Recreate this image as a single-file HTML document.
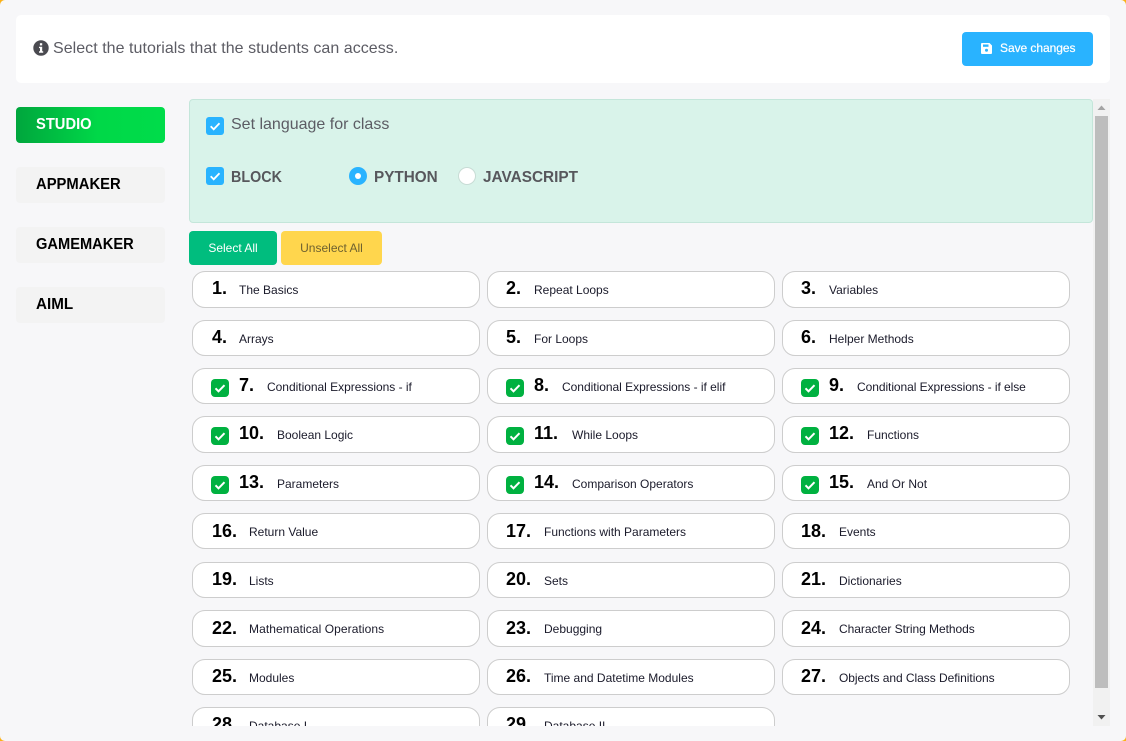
<!DOCTYPE html>
<html><head><meta charset="utf-8"><style>
*{box-sizing:border-box;margin:0;padding:0}
html,body{width:1126px;height:741px;overflow:hidden;background:#fbb117}
body{position:relative;font-family:"Liberation Sans",sans-serif}
#w{position:absolute;left:0;top:0;width:1126px;height:741px;background:#f7f7f9;border-radius:5px;overflow:hidden}
.a{position:absolute;white-space:nowrap}
.sx{display:inline-block;transform-origin:left center}
.tab{position:absolute;left:16px;width:149px;height:36px;background:#f3f3f3;border-radius:4px;font-weight:bold;font-size:16px;line-height:35px;padding-left:20px;color:#000}
#sc{position:absolute;left:189px;top:0;width:906px;height:726px;overflow:hidden}
.c{position:absolute;width:288px;height:36px;background:#fff;border:1px solid #cdcdcd;border-radius:13px}
.t{height:37px}
.n{position:absolute;top:6px;font-size:18px;line-height:21px;font-weight:bold;color:#000;white-space:nowrap}
.d{top:7px}
.l{position:absolute;top:11px;font-size:12px;line-height:15px;color:#1a1a2a;white-space:nowrap}
.k{position:absolute;left:18px;top:10px;width:18px;height:18px;background:#00b140;border-radius:4px}
.k svg,.b svg{position:absolute;left:0;top:0}
.b{position:absolute;width:18px;height:18px;background:#29b3ff;border-radius:3px}
</style></head><body><div id="w">

<div class="a" style="left:16px;top:15px;width:1094px;height:68px;background:#fff;border-radius:5px"></div>
<svg class="a" style="left:33px;top:40px" width="16" height="16" viewBox="0 0 16 16"><circle cx="8" cy="8" r="7.7" fill="#4a4a50"/><rect x="6.9" y="3.2" width="2.3" height="2.2" fill="#fff"/><path d="M6 6.7h3.2v4.6h1v1.4H6v-1.4h1V8.1H6z" fill="#fff"/></svg>
<div class="a" style="left:53px;top:39px;font-size:16px;line-height:19px;color:#5c5c64;letter-spacing:.04px">Select the tutorials that the students can access.</div>

<div class="a" style="left:962px;top:32px;width:131px;height:34px;background:#29b3ff;border-radius:4px"></div>
<svg class="a" style="left:981px;top:43px" width="11" height="11" viewBox="0 0 11 11"><path d="M1 0H8.5L11 2.5V10a1 1 0 0 1-1 1H1a1 1 0 0 1-1-1V1a1 1 0 0 1 1-1z" fill="#fff"/><rect x="2" y="1.5" width="5.5" height="2.3" fill="#29b3ff"/><circle cx="5.5" cy="7.3" r="1.5" fill="#29b3ff"/></svg>
<div class="a" style="left:1000px;top:41px;font-size:12px;line-height:15px;color:#fff;-webkit-text-stroke:.2px #fff;letter-spacing:-.05px">Save changes</div>

<div class="tab" style="top:107px;background:linear-gradient(90deg,#00a63d 0%,#00d848 55%,#00dc4a 100%);color:#fff"><span class="sx" style="transform:scaleX(.92)">STUDIO</span></div>
<div class="tab" style="top:167px"><span class="sx" style="transform:scaleX(.925)">APPMAKER</span></div>
<div class="tab" style="top:227px"><span class="sx" style="transform:scaleX(.916)">GAMEMAKER</span></div>
<div class="tab" style="top:287px"><span class="sx" style="transform:scaleX(.95)">AIML</span></div>

<div class="a" style="left:189px;top:99px;width:904px;height:124px;background:#d9f3ea;border:1px solid #c4e6da;border-radius:4px"></div>
<div class="b" style="left:206px;top:117px"><svg width="18" height="18"><path d="M4.7 9.3l3 3L13.5 6.2" fill="none" stroke="#fff" stroke-width="1.8"/></svg></div>
<div class="a" style="left:231px;top:115px;font-size:16px;line-height:19px;color:#5c5c64">Set language for class</div>
<div class="b" style="left:206px;top:167px"><svg width="18" height="18"><path d="M4.7 9.3l3 3L13.5 6.2" fill="none" stroke="#fff" stroke-width="1.8"/></svg></div>
<div class="a" style="left:231px;top:168px;font-size:16px;line-height:19px;font-weight:bold;color:#57575c"><span class="sx" style="transform:scaleX(.895)">BLOCK</span></div>
<div class="a" style="left:349px;top:167px;width:18px;height:18px;border-radius:50%;background:#29b3ff"></div>
<div class="a" style="left:355px;top:173px;width:6px;height:6px;border-radius:50%;background:#fff"></div>
<div class="a" style="left:374px;top:168px;font-size:16px;line-height:19px;font-weight:bold;color:#57575c"><span class="sx" style="transform:scaleX(.955)">PYTHON</span></div>
<div class="a" style="left:458px;top:167px;width:18px;height:18px;border-radius:50%;background:#fff;border:1px solid #c8dcd5"></div>
<div class="a" style="left:483px;top:168px;font-size:16px;line-height:19px;font-weight:bold;color:#57575c"><span class="sx" style="transform:scaleX(.96)">JAVASCRIPT</span></div>

<div class="a" style="left:189px;top:231px;width:88px;height:34px;background:#00bd7e;border-radius:4px;color:#fff;font-size:12px;line-height:34px;text-align:center">Select All</div>
<div class="a" style="left:281px;top:231px;width:101px;height:34px;background:#ffd64d;border-radius:4px;color:#6e6130;font-size:12px;line-height:34px;text-align:center">Unselect All</div>

<div id="sc">
<div class="c t" style="left:3px;top:271px"><span class="n" style="left:19px">1.</span><span class="l" style="left:46px">The Basics</span></div>
<div class="c t" style="left:298px;top:271px"><span class="n" style="left:18px">2.</span><span class="l" style="left:46px">Repeat Loops</span></div>
<div class="c t" style="left:593px;top:271px"><span class="n" style="left:18px">3.</span><span class="l" style="left:46px">Variables</span></div>

<div class="c" style="left:3px;top:320px"><span class="n" style="left:19px">4.</span><span class="l" style="left:46px">Arrays</span></div>
<div class="c" style="left:298px;top:320px"><span class="n" style="left:18px">5.</span><span class="l" style="left:46px">For Loops</span></div>
<div class="c" style="left:593px;top:320px"><span class="n" style="left:18px">6.</span><span class="l" style="left:46px">Helper Methods</span></div>

<div class="c" style="left:3px;top:368px"><i class="k"><svg width="18" height="18"><path d="M4.5 9.3l3 3L13.5 6.2" fill="none" stroke="#fff" stroke-width="2"/></svg></i><span class="n" style="left:46px">7.</span><span class="l" style="left:74px;letter-spacing:-.02px">Conditional Expressions - if</span></div>
<div class="c" style="left:298px;top:368px"><i class="k"><svg width="18" height="18"><path d="M4.5 9.3l3 3L13.5 6.2" fill="none" stroke="#fff" stroke-width="2"/></svg></i><span class="n" style="left:46px">8.</span><span class="l" style="left:74px;letter-spacing:-.02px">Conditional Expressions - if elif</span></div>
<div class="c" style="left:593px;top:368px"><i class="k"><svg width="18" height="18"><path d="M4.5 9.3l3 3L13.5 6.2" fill="none" stroke="#fff" stroke-width="2"/></svg></i><span class="n" style="left:46px">9.</span><span class="l" style="left:74px;letter-spacing:-.06px">Conditional Expressions - if else</span></div>

<div class="c t" style="left:3px;top:416px"><i class="k"><svg width="18" height="18"><path d="M4.5 9.3l3 3L13.5 6.2" fill="none" stroke="#fff" stroke-width="2"/></svg></i><span class="n" style="left:46px">10.</span><span class="l" style="left:84px">Boolean Logic</span></div>
<div class="c t" style="left:298px;top:416px"><i class="k"><svg width="18" height="18"><path d="M4.5 9.3l3 3L13.5 6.2" fill="none" stroke="#fff" stroke-width="2"/></svg></i><span class="n" style="left:46px">11.</span><span class="l" style="left:84px">While Loops</span></div>
<div class="c t" style="left:593px;top:416px"><i class="k"><svg width="18" height="18"><path d="M4.5 9.3l3 3L13.5 6.2" fill="none" stroke="#fff" stroke-width="2"/></svg></i><span class="n" style="left:46px">12.</span><span class="l" style="left:84px">Functions</span></div>

<div class="c" style="left:3px;top:465px"><i class="k"><svg width="18" height="18"><path d="M4.5 9.3l3 3L13.5 6.2" fill="none" stroke="#fff" stroke-width="2"/></svg></i><span class="n" style="left:46px">13.</span><span class="l" style="left:84px">Parameters</span></div>
<div class="c" style="left:298px;top:465px"><i class="k"><svg width="18" height="18"><path d="M4.5 9.3l3 3L13.5 6.2" fill="none" stroke="#fff" stroke-width="2"/></svg></i><span class="n" style="left:46px">14.</span><span class="l" style="left:84px">Comparison Operators</span></div>
<div class="c" style="left:593px;top:465px"><i class="k"><svg width="18" height="18"><path d="M4.5 9.3l3 3L13.5 6.2" fill="none" stroke="#fff" stroke-width="2"/></svg></i><span class="n" style="left:46px">15.</span><span class="l" style="left:84px">And Or Not</span></div>

<div class="c" style="left:3px;top:513px"><span class="n d" style="left:19px">16.</span><span class="l" style="left:56px">Return Value</span></div>
<div class="c" style="left:298px;top:513px"><span class="n d" style="left:18px">17.</span><span class="l" style="left:56px">Functions with Parameters</span></div>
<div class="c" style="left:593px;top:513px"><span class="n d" style="left:18px">18.</span><span class="l" style="left:56px">Events</span></div>

<div class="c" style="left:3px;top:562px"><span class="n" style="left:19px">19.</span><span class="l" style="left:56px">Lists</span></div>
<div class="c" style="left:298px;top:562px"><span class="n" style="left:18px">20.</span><span class="l" style="left:56px">Sets</span></div>
<div class="c" style="left:593px;top:562px"><span class="n" style="left:18px">21.</span><span class="l" style="left:56px">Dictionaries</span></div>

<div class="c t" style="left:3px;top:610px"><span class="n d" style="left:19px">22.</span><span class="l" style="left:56px;letter-spacing:.08px">Mathematical Operations</span></div>
<div class="c t" style="left:298px;top:610px"><span class="n d" style="left:18px">23.</span><span class="l" style="left:56px">Debugging</span></div>
<div class="c t" style="left:593px;top:610px"><span class="n d" style="left:18px">24.</span><span class="l" style="left:56px;letter-spacing:-.04px">Character String Methods</span></div>

<div class="c" style="left:3px;top:659px"><span class="n" style="left:19px">25.</span><span class="l" style="left:56px">Modules</span></div>
<div class="c" style="left:298px;top:659px"><span class="n" style="left:18px">26.</span><span class="l" style="left:56px">Time and Datetime Modules</span></div>
<div class="c" style="left:593px;top:659px"><span class="n" style="left:18px">27.</span><span class="l" style="left:56px;letter-spacing:-.04px">Objects and Class Definitions</span></div>

<div class="c" style="left:3px;top:707px"><span class="n" style="left:19px">28.</span><span class="l" style="left:56px">Database I</span></div>
<div class="c" style="left:298px;top:707px"><span class="n" style="left:18px">29.</span><span class="l" style="left:56px">Database II</span></div>
</div>

<div class="a" style="left:1093px;top:99px;width:17px;height:627px;background:#f1f1f1"></div>
<div class="a" style="left:1095px;top:116px;width:13px;height:572px;background:#bdbdbd"></div>
<svg class="a" style="left:1093px;top:99px" width="17" height="17"><path d="M8.5 6.5L12.5 11H4.5z" fill="#a3a3a3"/></svg>
<svg class="a" style="left:1093px;top:709px" width="17" height="17"><path d="M4.5 6H12.5L8.5 10.5z" fill="#505050"/></svg>
</div></body></html>
